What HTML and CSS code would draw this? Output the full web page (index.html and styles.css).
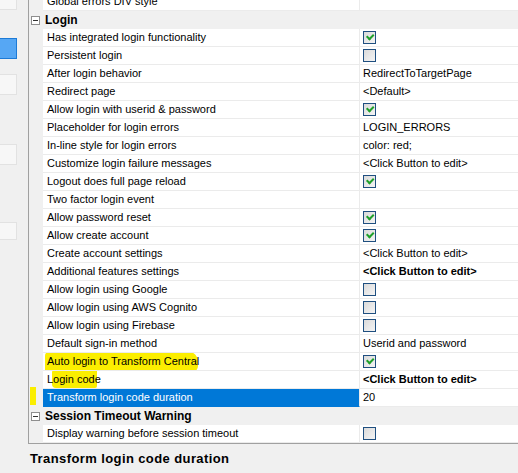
FILE: index.html
```html
<!DOCTYPE html>
<html lang="en">
<head>
    <meta charset="UTF-8">
    <meta name="viewport" content="width=device-width, initial-scale=1.0">
    <title>Properties</title>
    <link rel="stylesheet" href="styles.css">
</head>
<body>

<div class="window">
    <div class="toolbar">
        <div class="tool tool-top"></div>
        <div class="tool tool-active"></div>
        <div class="tool"></div>
        <div class="tool tool-gap"></div>
        <div class="tool tool-gap2"></div>
    </div>

    <div class="main">
        <div class="grid">
            <div class="row first">
                <div class="gutter"></div>
                <div class="name">Global errors DIV style</div>
                <div class="value"></div>
            </div>

            <div class="category">
                <div class="gutter"><span class="toggle"></span></div>
                <div class="cat-name">Login</div>
            </div>

            <div class="row">
                <div class="gutter"></div>
                <div class="name">Has integrated login functionality</div>
                <div class="value"><span class="check on"></span></div>
            </div>
            <div class="row">
                <div class="gutter"></div>
                <div class="name">Persistent login</div>
                <div class="value"><span class="check"></span></div>
            </div>
            <div class="row">
                <div class="gutter"></div>
                <div class="name">After login behavior</div>
                <div class="value">RedirectToTargetPage</div>
            </div>
            <div class="row">
                <div class="gutter"></div>
                <div class="name">Redirect page</div>
                <div class="value">&lt;Default&gt;</div>
            </div>
            <div class="row">
                <div class="gutter"></div>
                <div class="name">Allow login with userid &amp; password</div>
                <div class="value"><span class="check on"></span></div>
            </div>
            <div class="row">
                <div class="gutter"></div>
                <div class="name">Placeholder for login errors</div>
                <div class="value">LOGIN_ERRORS</div>
            </div>
            <div class="row">
                <div class="gutter"></div>
                <div class="name">In-line style for login errors</div>
                <div class="value">color: red;</div>
            </div>
            <div class="row">
                <div class="gutter"></div>
                <div class="name">Customize login failure messages</div>
                <div class="value">&lt;Click Button to edit&gt;</div>
            </div>
            <div class="row">
                <div class="gutter"></div>
                <div class="name">Logout does full page reload</div>
                <div class="value"><span class="check on"></span></div>
            </div>
            <div class="row">
                <div class="gutter"></div>
                <div class="name">Two factor login event</div>
                <div class="value"></div>
            </div>
            <div class="row">
                <div class="gutter"></div>
                <div class="name">Allow password reset</div>
                <div class="value"><span class="check on"></span></div>
            </div>
            <div class="row">
                <div class="gutter"></div>
                <div class="name">Allow create account</div>
                <div class="value"><span class="check on"></span></div>
            </div>
            <div class="row">
                <div class="gutter"></div>
                <div class="name">Create account settings</div>
                <div class="value">&lt;Click Button to edit&gt;</div>
            </div>
            <div class="row">
                <div class="gutter"></div>
                <div class="name">Additional features settings</div>
                <div class="value bold">&lt;Click Button to edit&gt;</div>
            </div>
            <div class="row">
                <div class="gutter"></div>
                <div class="name">Allow login using Google</div>
                <div class="value"><span class="check"></span></div>
            </div>
            <div class="row">
                <div class="gutter"></div>
                <div class="name">Allow login using AWS Cognito</div>
                <div class="value"><span class="check"></span></div>
            </div>
            <div class="row">
                <div class="gutter"></div>
                <div class="name">Allow login using Firebase</div>
                <div class="value"><span class="check"></span></div>
            </div>
            <div class="row">
                <div class="gutter"></div>
                <div class="name">Default sign-in method</div>
                <div class="value">Userid and password</div>
            </div>
            <div class="row">
                <div class="gutter"></div>
                <div class="name"><span class="marker marker-auto"></span><span class="label">Auto login to Transform Central</span></div>
                <div class="value"><span class="check on"></span></div>
            </div>
            <div class="row">
                <div class="gutter"></div>
                <div class="name"><span class="marker marker-code"></span><span class="label">Login code</span></div>
                <div class="value bold">&lt;Click Button to edit&gt;</div>
            </div>
            <div class="row selected">
                <div class="gutter"><span class="marker marker-bar"></span></div>
                <div class="name">Transform login code duration</div>
                <div class="value">20</div>
            </div>

            <div class="category">
                <div class="gutter"><span class="toggle"></span></div>
                <div class="cat-name">Session Timeout Warning</div>
            </div>

            <div class="row">
                <div class="gutter"></div>
                <div class="name">Display warning before session timeout</div>
                <div class="value"><span class="check"></span></div>
            </div>
        </div>

        <div class="desc">Transform login code duration</div>
    </div>
</div>

</body>
</html>
```

FILE: styles.css
```css
body {
    margin: 0;
    background-color: #f0f0f0;
    font-family: "Liberation Sans", Arial, sans-serif;
    font-size: 11px;
    color: #000;
    overflow: hidden;
}
.window {
    display: flex;
    height: 473px;
}

/* left tool strip */
.toolbar {
    width: 28px;
    flex-shrink: 0;
}
.tool {
    width: 16px;
    height: 19px;
    margin-top: 15px;
    border: 1px solid #e2e2e2;
    border-left: none;
    background-color: #f7f7f7;
}
.tool-top {
    margin-top: -11px;
}
.tool-active {
    margin-top: 28px;
    background-color: #56a7f4;
    border-color: #1c7ad6;
}
.tool-gap {
    margin-top: 49px;
}
.tool-gap2 {
    margin-top: 57px;
    height: 16px;
}

/* property grid */
.main {
    flex: 1;
    display: flex;
    flex-direction: column;
}
.grid {
    margin-top: -7px;
    border-left: 1px solid #a0a0a0;
    border-bottom: 1px solid #a0a0a0;
}
.row {
    display: grid;
    grid-template-columns: 14px 317px 1fr;
    height: 18px;
}
.gutter {
    background-color: #f0f0f0;
    position: relative;
}
.name,
.value {
    background-color: #fff;
    border-bottom: 1px solid #ebebeb;
    line-height: 17px;
    white-space: nowrap;
    overflow: hidden;
}
.name {
    position: relative;
    padding-left: 4px;
    border-right: 1px solid #ebebeb;
}
.value {
    padding-left: 3px;
    display: flex;
    align-items: center;
}
.value.bold {
    font-weight: bold;
}
.selected .name {
    background-color: #0078d7;
    color: #fff;
    border-bottom-color: #0078d7;
}

.category {
    display: grid;
    grid-template-columns: 14px 1fr;
    height: 18px;
    background-color: #f0f0f0;
}
.cat-name {
    font-weight: bold;
    font-size: 12px;
    line-height: 18px;
    padding-left: 2px;
}
.toggle {
    position: absolute;
    left: 2px;
    top: 5px;
    width: 7px;
    height: 7px;
    border: 1px solid #8e8e8e;
    background-color: #fff;
}
.toggle::after {
    content: "";
    position: absolute;
    left: 1px;
    top: 3px;
    width: 5px;
    height: 1px;
    background-color: #333;
}

/* checkbox */
.check {
    position: relative;
    width: 11px;
    height: 11px;
    border: 1px solid #1f4f80;
    background: linear-gradient(135deg, #dadada, #f4f4f4);
}
.check.on::after {
    content: "";
    position: absolute;
    left: 2px;
    top: 1px;
    width: 5px;
    height: 3px;
    border-left: 2px solid #1fa02a;
    border-bottom: 2px solid #1fa02a;
    transform: rotate(-45deg) translate(0, 1px);
}

/* highlighter strokes */
.label {
    position: relative;
}
.marker {
    position: absolute;
    background-color: #fbee00;
}
.marker-auto {
    left: 2px;
    top: -1px;
    width: 153px;
    height: 20px;
    border-radius: 4px 9px 6px 2px;
}
.marker-code {
    left: 9px;
    top: -4px;
    width: 45px;
    height: 21px;
    border-radius: 6px 3px 2px 4px;
}
.marker-bar {
    left: 1px;
    top: -2px;
    width: 6px;
    height: 18px;
}

.desc {
    padding: 7px 0 0 2px;
    font-weight: bold;
    font-size: 13px;
    letter-spacing: 0.4px;
}
```
